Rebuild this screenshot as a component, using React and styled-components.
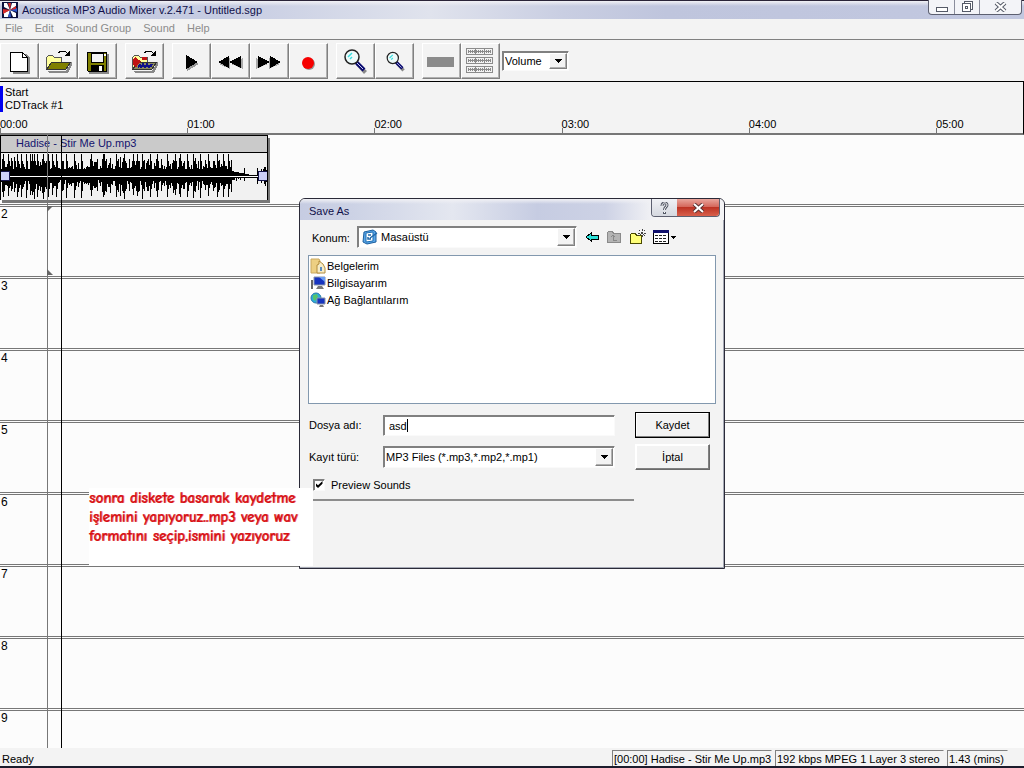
import React, { useState } from 'react';
import styled, { createGlobalStyle, css } from 'styled-components';

const GRAY = '#777';
const FACE = '#f3f3f3';
const TRACK_COUNT = 9;

const GlobalStyle = createGlobalStyle`
  * { box-sizing: border-box; }

  body {
    margin: 0;
    overflow: hidden;
    background: ${FACE};
    color: #000;
    font: 11px/14px 'Liberation Sans', Arial, sans-serif;
  }

  button, input, select { font: inherit; color: inherit; }
`;

const raised = css`
  border: 1px solid;
  border-color: #fff #808080 #808080 #fff;
  box-shadow: inset -1px -1px 0 #b0b0b0;
`;

const sunken = css`
  border: 1px solid;
  border-color: #808080 #fafafa #fafafa #808080;
  box-shadow: inset 1px 1px 0 #808080;
`;

const Window = styled.div`
  position: relative;
  display: flex;
  flex-direction: column;
  height: 100vh;
  overflow: hidden;
  border-bottom: 2px solid #1c1c2c;
`;

const TitleBar = styled.header`
  display: flex;
  align-items: center;
  gap: 4px;
  height: 19px;
  flex: none;
  padding-left: 2px;
  border-top: 1px solid #2a2438;
  background:
    linear-gradient(#f1f1f5, #f1f1f500) 0 0 / 100% 5px no-repeat,
    linear-gradient(90deg, #c2c8e0, #c6cce2 22%, #e0e3ed 42%, #c9cee2 55%, #bfc5dd 65%, #c2c8e0);
  color: #10104a;
`;

const CaptionButtons = styled.div`
  display: flex;
  align-self: flex-start;
  height: 15px;
  margin: -1px 2px 0 auto;
  border: 1px solid #5c5f70;
  border-top: 0;
  border-radius: 0 0 4px 4px;
  background: #f3f4f8;
`;

const CaptionButton = styled.button`
  display: grid;
  place-items: center;
  width: ${({ $wide }) => ($wide ? 42 : 25)}px;
  padding: 0;
  border: 0;
  background: none;

  & + & { border-left: 1px solid #8a8d9c; }
`;

const MenuBar = styled.nav`
  display: flex;
  gap: 12px;
  flex: none;
  height: 21px;
  padding: 0 5px 2px;
  border-bottom: 1px solid #808080;
`;

const MenuItem = styled.button`
  padding: 0;
  border: 0;
  background: none;
  color: #8c8c8c;
`;

const Toolbar = styled.div`
  display: flex;
  align-items: center;
  gap: 2px;
  flex: none;
  height: 42px;
  border-bottom: 1px solid #000;
`;

const ToolGroup = styled.div`
  display: flex;

  & + & { margin-left: 6px; }
`;

const ToolButton = styled.button`
  ${raised}
  display: grid;
  place-items: center;
  width: 39px;
  height: 36px;
  padding: 0 2px 0 0;
  background: ${FACE};
`;

const Combo = styled.div`
  ${sunken}
  display: grid;
  grid-template-columns: minmax(0, 1fr) 18px;
  width: ${({ $width }) => $width || '100%'};
  height: ${({ $height }) => $height || 22}px;
  padding: 1px;
  background: #fff;
`;

const ComboSelect = styled.select`
  grid-area: 1 / 1 / 2 / 3;
  appearance: none;
  padding: 0 18px 0 ${({ $indent }) => $indent || 1}px;
  border: 0;
  outline: 0;
  background: transparent;
`;

const ComboArrow = styled.span`
  ${raised}
  grid-area: 1 / 2;
  display: grid;
  place-items: center;
  background: ${FACE};
  pointer-events: none;
`;

const ComboIcon = styled.span`
  grid-area: 1 / 1;
  align-self: center;
  height: 16px;
  padding-left: 3px;
  pointer-events: none;
`;

const Ruler = styled.section`
  display: flex;
  flex-direction: column;
  flex: none;
  height: 53px;
  padding-top: 4px;
  border-bottom: 2px solid ${GRAY};
  border-right: 1px solid #000;
`;

const Marker = styled.div`
  align-self: flex-start;
  padding-left: 2px;
  border-left: 3px solid #0000f0;
  line-height: 13px;
`;

const Ticks = styled.div`
  display: flex;
  margin-top: auto;
`;

const Tick = styled.span`
  flex: 0 0 18.3%;
  height: 16px;
  background: linear-gradient(${GRAY}, ${GRAY}) 0 100% / 1px 5px no-repeat;
`;

const Tracks = styled.main`
  position: relative;
  flex: 1;
  min-height: 0;
  overflow: hidden;
  background: #fcfcfc;
`;

const Track = styled.section`
  height: 72px;
  padding-left: ${({ $filled }) => ($filled ? 0 : 1)}px;
  border-bottom: 3px double ${GRAY};
  font-size: 12px;
`;

const Clip = styled.article`
  width: 268px;
  border: 1px solid #000;
  border-bottom: 0;
  background: #f1f1f1;
  box-shadow: 2px 3px 0 ${GRAY};
`;

const ClipTitle = styled.h2`
  height: 17px;
  margin: 0;
  padding-left: 15px;
  border-bottom: 1px solid #000;
  background: #cacaca;
  color: #14146e;
  font-size: 11px;
  font-weight: normal;
  line-height: 15px;
`;

const Wave = styled.svg`
  display: block;
  width: 100%;
  height: 47px;
`;

const Cursor = styled.div`
  position: absolute;
  top: 0;
  bottom: 0;
  left: ${({ $left }) => $left}px;
  width: 1px;
  background: ${({ $color }) => $color};
`;

const CursorFlag = styled.svg`
  position: absolute;
  top: ${({ $top }) => $top}px;
  left: 0;
`;

const StatusBar = styled.footer`
  display: flex;
  gap: 3px;
  flex: none;
  height: 18px;
  padding: 2px 16px 0 2px;
  line-height: 16px;
`;

const StatusText = styled.span`
  flex: 1;
  padding-top: 1px;
`;

const StatusPane = styled.span`
  width: ${({ $width }) => $width}px;
  padding-left: 1px;
  border: 1px solid #808080;
  border-right-color: transparent;
  border-bottom: 0;
  white-space: nowrap;
`;

const Dialog = styled.form`
  position: absolute;
  top: 198px;
  left: 299px;
  width: 426px;
  height: 371px;
  border: 1px solid #2a2a38;
  border-radius: 6px 6px 0 0;
  box-shadow: inset -1px -1px 0 #a5a9b5;
  background: ${FACE};
`;

const DialogTitle = styled.div`
  display: flex;
  justify-content: space-between;
  height: 21px;
  padding: 0 4px 0 9px;
  border-radius: 5px 5px 0 0;
  background:
    linear-gradient(#f1f1f5, #f1f1f500) 0 0 / 100% 5px no-repeat,
    linear-gradient(90deg, #c6cce2, #ccd2e5 12%, #e4e7f0 36%, #c6cce2 56%, #cdd2e5 72%, #f4f4f6 84%);
  color: #10104a;
  line-height: 24px;
`;

const DialogCaption = styled.div`
  display: flex;
  height: 18px;
  border: 1px solid #5c5f70;
  border-top: 0;
  border-radius: 0 0 4px 4px;
  overflow: hidden;
`;

const DialogCaptionButton = styled.button`
  display: grid;
  place-items: center;
  width: ${({ $close }) => ($close ? 42 : 25)}px;
  padding: 0;
  border: 0;
  background: ${({ $close }) => ($close
    ? 'linear-gradient(#e9a59c, #d5685c 45%, #bd3324 50%, #d8604d)'
    : 'linear-gradient(#f0f1f5, #d5d8e0)')};
`;

const LocationRow = styled.div`
  display: flex;
  align-items: center;
  height: 22px;
  margin: 6px 8px 7px 12px;
`;

const LocationLabel = styled.label`
  width: 45px;
  padding-top: 2px;
`;

const LocationTools = styled.div`
  display: flex;
  gap: 7px;
  margin-left: 8px;
`;

const IconButton = styled.button`
  display: grid;
  place-items: center;
  height: 18px;
  padding: 0;
  border: 0;
  background: none;
`;

const FileList = styled.ul`
  height: 149px;
  margin: 0 8px;
  padding: 1px;
  border: 1px solid #8298ae;
  background: #fff;
  list-style: none;
`;

const FileItem = styled.li`
  display: flex;
  align-items: center;
  gap: 1px;
  height: 17px;
`;

const Fields = styled.div`
  display: grid;
  grid-template-columns: 74px 232px 75px;
  grid-template-rows: 26px 26px;
  align-items: center;
  row-gap: 6px;
  padding: 8px 9px 0;
`;

const TextBox = styled.label`
  ${sunken}
  display: flex;
  align-items: center;
  height: 21px;
  padding: 1px 4px 0 5px;
  background: #fff;
`;

const FileName = styled.input`
  field-sizing: content;
  padding: 0;
  border: 0;
  outline: 0;
  background: none;
  caret-color: transparent;
`;

const Caret = styled.i`
  width: 1px;
  height: 13px;
  background: #000;
`;

const DialogButton = styled.button`
  margin-left: 20px;
  width: 75px;
  height: 26px;
  padding: 0;
  border: 1px solid;
  border-color: ${({ $primary }) => ($primary ? '#000' : '#fff #6a6a6a #6a6a6a #fff')};
  background: ${FACE};
  box-shadow: inset -1px -1px 0 #808080, inset 1px 1px 0 #fff;
`;

const Preview = styled.label`
  display: flex;
  align-items: center;
  gap: 6px;
  width: 321px;
  height: 31px;
  margin-left: 13px;
  border-bottom: 2px solid #8c8c8c;
`;

const CheckBox = styled.input`
  ${sunken}
  appearance: none;
  display: grid;
  place-items: center;
  width: 12px;
  height: 12px;
  margin: 0;
  background: #fff;

  &:checked::before {
    content: '';
    width: 7px;
    height: 7px;
    background: #000;
    clip-path: polygon(0 30%, 36% 60%, 100% 0, 100% 38%, 36% 100%, 0 68%);
  }
`;

const Note = styled.aside`
  position: absolute;
  top: 488px;
  left: 89px;
  width: 224px;
  height: 78px;
  padding-top: 1px;
  background: #fff;
  color: #d80f14;
  font: bold 15px/19px 'Comic Sans MS', 'Comic Neue', 'Open Sans', sans-serif;
  text-shadow: 1px 0 0 #d80f1499;
  white-space: nowrap;
`;

const Drawing = ({ width = 28, height = 28, children, ...rest }) => (
  <svg width={width} height={height} viewBox={`0 0 ${width} ${height}`} shapeRendering="crispEdges" aria-hidden="true" {...rest}>
    {children}
  </svg>
);

const AppIcon = () => (
  <Drawing width={16} height={16} shapeRendering="auto">
    <rect width="16" height="16" fill="#0b0f3c" />
    <path d="M8 8L2 5V1h3zM8 8l2-7h4v3zM8 8l6 3v4h-3zM8 8l-2 7H2v-4z" fill="#fff" />
    <path d="M8 8L6 1h3zM8 8L1 7v4z" fill="#d42a2a" />
    <path d="M8 8l7-2v4zM8 8l1 7H6z" fill="#2e56c8" />
    <path d="M8 8L1 9v3zM8 8l6-4v3z" fill="#d42a2a" />
  </Drawing>
);

const Arrow = () => (
  <Drawing width={7} height={4}><path d="M0 0h7L3.500 4z" fill="#000" /></Drawing>
);

const NewIcon = () => (
  <Drawing>
    <path d="M8 7h13l4 4v16H8z" fill="#888" />
    <path d="M5.500 5.500h12l5 5v14h-17z" fill="#fff" stroke="#000" />
    <path d="M17.500 5.500v5h5" fill="none" stroke="#000" />
  </Drawing>
);

const FolderShape = ({ back = '#ffff9c', front = '#808000' }) => (
  <>
    <path d="M4 24h18l6-10v4l-4 8H5z" fill="#888" />
    <path d="M2.500 22.500v-12l2-2h4l2 2h7v5" fill={back} stroke="#555" />
    <path d="M2.500 22.500l5-7h19l-5 7z" fill={front} stroke="#333" />
    <path d="M14 6l3-2h4l3 3" fill="none" stroke="#000" />
    <path d="M26 3v6h-6z" fill="#000" />
  </>
);

const OpenIcon = () => (
  <Drawing><FolderShape /></Drawing>
);

const ImportIcon = () => (
  <Drawing>
    <FolderShape front="#8c8a5c" />
    <path d="M3 12l3-2 2 3 3 1-3 3-2 4-3-4zM12 10h5v3h-5z" fill="#c01414" />
    <path d="M8 21l2-4 1 4 2-5 2 5 2-5 2 5 2-4 2 1" fill="none" stroke="#10108c" />
    <path d="M8 19h14" stroke="#10108c" strokeWidth="2" />
  </Drawing>
);

const SaveIcon = () => (
  <Drawing>
    <path d="M6 7h20v20H6z" fill="#888" />
    <path d="M4.500 5.500h19v19h-18l-1-1z" fill="#808000" stroke="#000" />
    <path d="M8 6h12v9H8z" fill="#f3f3f3" stroke="#000" />
    <path d="M8 18h13v7H8z" fill="#000" />
    <path d="M16 19h3v5h-3z" fill="#fff" />
    <path d="M21 7h2v2h-2z" fill="#fff" />
  </Drawing>
);

const PlayIcon = () => (
  <Drawing>
    <path d="M10 10l12 7-12 7z" fill="#999" />
    <path d="M9 8l12 7-12 7z" fill="#000" />
  </Drawing>
);

const SkipIcon = ({ forward }) => (
  <Drawing transform={forward ? 'scale(-1 1)' : undefined}>
    <path d="M14 11v11L3 17zM27 11v11l-12-5z" fill="#aaa" />
    <path d="M13 9v12L2 15zM25 9v12l-12-6z" fill="#000" />
  </Drawing>
);

const RecordIcon = () => (
  <Drawing shapeRendering="auto">
    <circle cx="15" cy="17" r="6" fill="#999" />
    <circle cx="14" cy="16" r="6" fill="#f60000" />
  </Drawing>
);

const LensIcon = ({ small }) => (
  <Drawing shapeRendering="auto">
    <g transform={small ? 'translate(4 3) scale(.8)' : undefined}>
      <path d="M17 16l9 8-3 3-8-9z" fill="#888" />
      <path d="M15 15l8 8" stroke="#0a0a70" strokeWidth="4" />
      <path d="M16 16l6 6" stroke="#c8ccf0" />
      <circle cx="11" cy="10" r="7" fill="#eefafa" stroke="#222" strokeWidth="1.500" />
      <path d="M7 10l4-4M9 12l2-2" stroke="#3cdede" strokeWidth="1.500" />
    </g>
  </Drawing>
);

const BarIcon = () => (
  <Drawing><rect y="10" width="27" height="10" rx="1" fill="#8b8b8b" /></Drawing>
);

const StripsIcon = () => (
  <Drawing width={27}>
    {[0, 9, 18].map((y) => (
      <g key={y}>
        <rect x="0.500" y={y + 1.5} width="26" height="6" fill="#f3f3f3" stroke="#8b8b8b" />
        <path d={`M2 ${y + 4.5}h23`} stroke="#8b8b8b" strokeWidth="3" strokeDasharray="1 1" />
        <path d={`M2 ${y + 4.5}h23M9.500 ${y + 1}v7M18.500 ${y + 1}v7`} stroke="#8b8b8b" />
      </g>
    ))}
  </Drawing>
);

const DesktopIcon = () => (
  <Drawing width={16} height={16} shapeRendering="auto">
    <path d="M2 3l9-2 3 2v10l-9 2-4-2z" fill="#5aa6e8" stroke="#1c5f9e" />
    <path d="M4 4l7-1v9l-7 1z" fill="#fff" stroke="#1c6fb4" />
    <path d="M6 6h3M6 8v2h3M8 9l7-5" fill="none" stroke="#2068a8" strokeWidth="1.500" />
  </Drawing>
);

const BackIcon = () => (
  <Drawing width={14} height={12}>
    <path d="M1 6l5-4v2h7v4H6v2z" fill="#2ce0d8" stroke="#000" />
  </Drawing>
);

const UpIcon = () => (
  <Drawing width={16} height={14}>
    <path d="M1.500 12.500v-10l1-1h4l1 2h7v9z" fill="#b4b4b4" stroke="#8a8a8a" />
    <path d="M7 5v6M5 7l2-2 2 2M7 10h4" fill="none" stroke="#888" />
  </Drawing>
);

const NewFolderIcon = () => (
  <Drawing width={17} height={16}>
    <path d="M1.500 14.500v-9l1-1h4l1 2h5v8z" fill="#ffff78" stroke="#4a4a00" />
    <path d="M13 0v9M9 4h8M10 1l6 6M16 1l-6 6" stroke="#444" strokeDasharray="2 1" />
  </Drawing>
);

const ViewIcon = () => (
  <Drawing width={24} height={14}>
    <rect x="0.500" y="0.500" width="15" height="13" fill="#fff" stroke="#000" />
    <path d="M0 1.500h16" stroke="#10106c" strokeWidth="3" />
    <path d="M2 5.500h12M2 8.500h12M2 11.500h12" stroke="#222" strokeDasharray="3 1" />
    <path d="M18 6h5l-2.500 3z" fill="#000" />
  </Drawing>
);

const DocumentsIcon = () => (
  <Drawing width={16} height={16} shapeRendering="auto">
    <path d="M1 1h8l1 2v12H1z" fill="#edcf82" stroke="#c9a860" />
    <path d="M7 7l2-1V3l4 3 2 4v5H7z" fill="#f6ecc8" stroke="#b28c3c" />
    <path d="M11 9v4" stroke="#5a8cc0" strokeWidth="2" />
  </Drawing>
);

const ComputerIcon = () => (
  <Drawing width={16} height={16} shapeRendering="auto">
    <path d="M1 5h2v9H1z" fill="#666" />
    <path d="M4 2h11v8H4z" fill="#1634c0" stroke="#8a94a8" />
    <path d="M9 2h6v5z" fill="#6a9cf4" />
    <path d="M8 11h4l2 3H6z" fill="#777" />
  </Drawing>
);

const NetworkIcon = () => (
  <Drawing width={16} height={16} shapeRendering="auto">
    <circle cx="6" cy="6" r="5" fill="#2cacdc" stroke="#2878a8" />
    <path d="M3 3l4-1 1 3-3 4-2-2z" fill="#54c46c" />
    <path d="M7 6h8v6H7z" fill="#1634c0" stroke="#8a94a8" />
    <path d="M10 13h3l1 2H9z" fill="#777" />
  </Drawing>
);

// x positions of the loudest beats in the clip
const PEAKS = [2, 7, 16, 20, 25, 29, 31, 33, 36, 42, 47, 51, 55, 60, 65, 73, 80, 90, 102, 103, 115, 123, 132, 136, 141, 149, 156, 166, 174, 179, 186, 192, 199, 207, 216, 222, 227];

const noiseAt = (x) => {
  const value = Math.sin(x * 12.9898) * 43758.5453;
  return value - Math.floor(value);
};

const levelAt = (x) => {
  if (x > 255) return 3 + Math.round(noiseAt(x) * 6);
  if (x === 243) return 8;
  if (x > 230) return Math.max(1, Math.round(5 - (x - 230) / 5));
  if (PEAKS.includes(x)) return 22;
  if (PEAKS.includes(x - 1)) return 15;
  return Math.round(7 + noiseAt(x) ** 2 * 12);
};

const WavePath = () => {
  let d = '';
  for (let x = 0; x < 266; x += 1) {
    const level = levelAt(x);
    d += `M${x}.500 ${23 - level}V${24 + Math.max(1, level - Math.round(noiseAt(x + 500) * 4))}`;
  }
  return <path d={d} stroke="#000" />;
};

const menus = ['File', 'Edit', 'Sound Group', 'Sound', 'Help'];

const toolGroups = [
  [['New', <NewIcon />], ['Open', <OpenIcon />], ['Save', <SaveIcon />]],
  [['Import sound', <ImportIcon />]],
  [['Play', <PlayIcon />], ['Rewind', <SkipIcon />], ['Forward', <SkipIcon forward />], ['Record', <RecordIcon />]],
  [['Zoom in', <LensIcon />], ['Zoom out', <LensIcon small />]],
  [['Single track', <BarIcon />], ['All tracks', <StripsIcon />]],
];

const files = [
  { name: 'Belgelerim', icon: <DocumentsIcon /> },
  { name: 'Bilgisayarım', icon: <ComputerIcon /> },
  { name: 'Ağ Bağlantılarım', icon: <NetworkIcon /> },
];

const SaveDialog = () => {
  const [fileName, setFileName] = useState('asd');
  const [preview, setPreview] = useState(true);

  return (
    <Dialog role="dialog" aria-label="Save As" onSubmit={(event) => event.preventDefault()}>
      <DialogTitle>
        Save As
        <DialogCaption>
          <DialogCaptionButton type="button" aria-label="Help">
            <Drawing width={9} height={12} shapeRendering="auto">
              <path d="M2 4c0-4 5-4 5-1 0 2-2.500 2-2.500 5M4.500 10v2" fill="none" stroke="#555a68" strokeWidth="3" />
              <path d="M2 4c0-4 5-4 5-1 0 2-2.500 2-2.500 5M4.500 10v1" fill="none" stroke="#fff" />
            </Drawing>
          </DialogCaptionButton>
          <DialogCaptionButton type="button" $close aria-label="Close">
            <Drawing width={13} height={10} shapeRendering="auto">
              <path d="M2 1l9 8M11 1L2 9" stroke="#5c3434" strokeWidth="4" />
              <path d="M2 1l9 8M11 1L2 9" stroke="#fff" strokeWidth="2" />
            </Drawing>
          </DialogCaptionButton>
        </DialogCaption>
      </DialogTitle>

      <LocationRow>
        <LocationLabel htmlFor="location">Konum:</LocationLabel>
        <Combo $width="220px">
          <ComboSelect id="location" $indent={22}><option>Masaüstü</option></ComboSelect>
          <ComboIcon><DesktopIcon /></ComboIcon>
          <ComboArrow><Arrow /></ComboArrow>
        </Combo>
        <LocationTools>
          <IconButton type="button" aria-label="Back"><BackIcon /></IconButton>
          <IconButton type="button" aria-label="Up one level"><UpIcon /></IconButton>
          <IconButton type="button" aria-label="New folder"><NewFolderIcon /></IconButton>
          <IconButton type="button" aria-label="View"><ViewIcon /></IconButton>
        </LocationTools>
      </LocationRow>

      <FileList>
        {files.map(({ name, icon }) => <FileItem key={name}>{icon}{name}</FileItem>)}
      </FileList>

      <Fields>
        <label htmlFor="file-name">Dosya adı:</label>
        <TextBox>
          <FileName id="file-name" value={fileName} onChange={(event) => setFileName(event.target.value)} />
          <Caret />
        </TextBox>
        <DialogButton $primary>Kaydet</DialogButton>
        <label htmlFor="file-type">Kayıt türü:</label>
        <Combo>
          <ComboSelect id="file-type"><option>MP3 Files (*.mp3,*.mp2,*.mp1)</option></ComboSelect>
          <ComboArrow><Arrow /></ComboArrow>
        </Combo>
        <DialogButton type="button">İptal</DialogButton>
      </Fields>

      <Preview>
        <CheckBox type="checkbox" checked={preview} onChange={() => setPreview(!preview)} />
        Preview Sounds
      </Preview>
    </Dialog>
  );
};

const App = () => (
  <Window>
    <GlobalStyle />
    <TitleBar>
      <AppIcon />
      Acoustica MP3 Audio Mixer v.2.471 - Untitled.sgp
      <CaptionButtons>
        <CaptionButton aria-label="Minimize">
          <Drawing width={12} height={10}><rect x="0.500" y="5.500" width="11" height="4" fill="#fff" stroke="#555a68" /></Drawing>
        </CaptionButton>
        <CaptionButton aria-label="Restore">
          <Drawing width={12} height={12}>
            <path d="M3.500 2.500v-2h8v8h-2" fill="#fff" stroke="#555a68" />
            <path d="M1.500 2.500h8v8h-8zM4.500 5.500h2v2h-2z" fill="#fff" stroke="#555a68" />
          </Drawing>
        </CaptionButton>
        <CaptionButton $wide aria-label="Close">
          <Drawing width={13} height={10} shapeRendering="auto">
            <path d="M2 1l9 8M11 1L2 9" stroke="#555a68" strokeWidth="4" />
            <path d="M2 1l9 8M11 1L2 9" stroke="#fff" strokeWidth="2" />
          </Drawing>
        </CaptionButton>
      </CaptionButtons>
    </TitleBar>

    <MenuBar>
      {menus.map((menu) => <MenuItem key={menu}>{menu}</MenuItem>)}
    </MenuBar>

    <Toolbar>
      {toolGroups.map((group) => (
        <ToolGroup key={group[0][0]}>
          {group.map(([label, icon]) => <ToolButton key={label} aria-label={label}>{icon}</ToolButton>)}
        </ToolGroup>
      ))}
      <Combo $width="67px" $height={20}>
        <ComboSelect aria-label="Envelope"><option>Volume</option></ComboSelect>
        <ComboArrow><Arrow /></ComboArrow>
      </Combo>
    </Toolbar>

    <Ruler>
      <Marker>Start<br />CDTrack #1</Marker>
      <Ticks>
        {['00:00', '01:00', '02:00', '03:00', '04:00', '05:00'].map((time) => <Tick key={time}>{time}</Tick>)}
      </Ticks>
    </Ruler>

    <Tracks>
      {Array.from({ length: TRACK_COUNT }, (_, index) => (
        <Track key={index} $filled={index === 0}>
          {index === 0 ? (
            <Clip>
              <ClipTitle>Hadise - Stir Me Up.mp3</ClipTitle>
              <Wave viewBox="0 0 266 47" shapeRendering="crispEdges" aria-hidden="true">
                <WavePath />
                <path d="M0 23.500h266" stroke="#fff" />
                <path d="M-.5 18.500h9v9h-9zM257.500 18.500h9v9h-9z" fill="#ccd0f8" stroke="#14144c" />
              </Wave>
            </Clip>
          ) : index + 1}
        </Track>
      ))}
      <Cursor $left={47} $color={GRAY}>
        <CursorFlag $top={71} width="6" height="6" aria-hidden="true"><path d="M0 0h6L0 6z" fill="#666" /></CursorFlag>
        <CursorFlag $top={134} width="6" height="6" aria-hidden="true"><path d="M0 0v6h6z" fill="#666" /></CursorFlag>
      </Cursor>
      <Cursor $left={61} $color="#000" />
    </Tracks>

    <StatusBar>
      <StatusText>Ready</StatusText>
      <StatusPane $width={160}>[00:00] Hadise - Stir Me Up.mp3</StatusPane>
      <StatusPane $width={169}>192 kbps MPEG 1 Layer 3 stereo</StatusPane>
      <StatusPane $width={61}>1.43 (mins)</StatusPane>
    </StatusBar>

    <SaveDialog />
    <Note>
      sonra diskete basarak kaydetme<br />
      işlemini yapıyoruz..mp3 veya wav<br />
      formatını seçip,ismini yazıyoruz
    </Note>
  </Window>
);

export default App;
